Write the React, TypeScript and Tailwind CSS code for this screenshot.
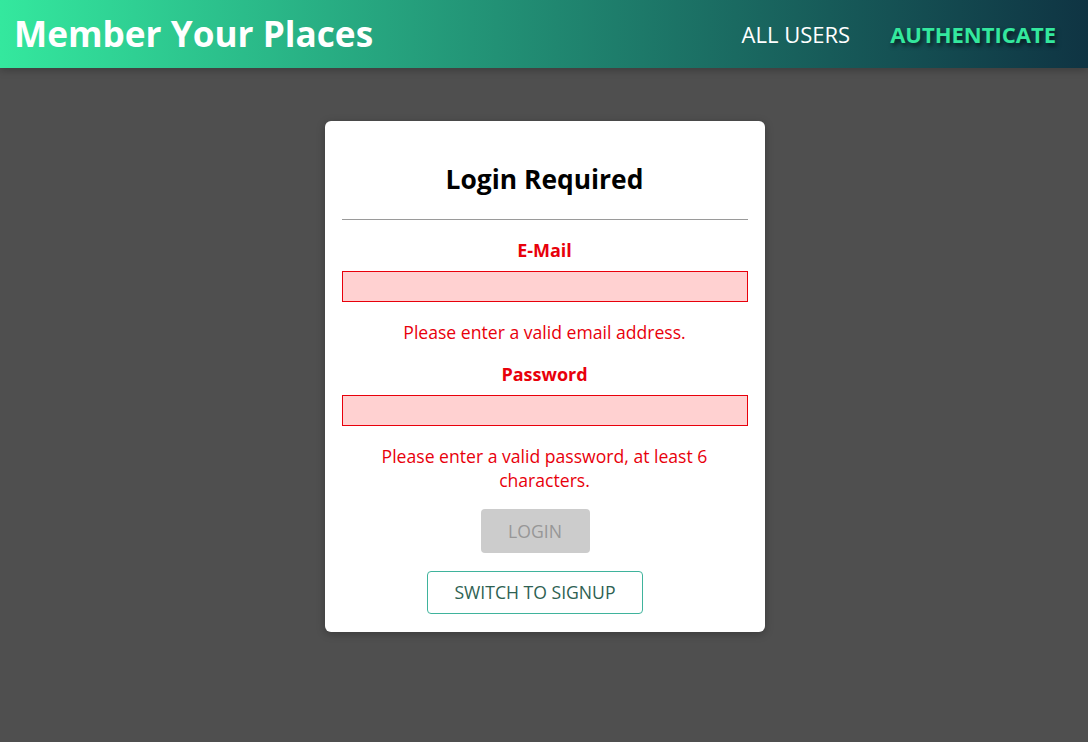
import React from 'react';

const font = { fontFamily: '"Open Sans", "Noto Sans", sans-serif' };

const Field: React.FC<{ label: string; type: string; error: string }> = ({ label, type, error }) => (
  <div className="flex flex-col">
    <label className="text-[18px] leading-[24px] font-bold text-[#e8000b] mb-[9px]">{label}</label>
    <input
      type={type}
      className="h-[31px] w-full border border-[#e8000b] bg-[#ffd1d1] px-1 outline-none"
    />
    <p className="mt-[18px] text-[17.6px] leading-[24px] text-[#e8000b] px-[20px]">{error}</p>
  </div>
);

export default function App() {
  return (
    <div className="min-h-[742px] bg-[#4f4f4f]" style={font}>
      <header className="h-[68px] flex items-center justify-between pl-[14px] pr-[32px] bg-gradient-to-r from-[#34e89e] to-[#0f3443] shadow-[0_2px_8px_rgba(0,0,0,0.26)]">
        <h1 className="text-[35.2px] font-bold text-white leading-none">Member Your Places</h1>
        <nav className="flex items-center gap-[40px] text-[22px]">
          <a className="text-white">ALL USERS</a>
          <a className="font-bold text-[#34e89e] [text-shadow:2px_3px_4px_rgba(0,0,0,0.6)]">AUTHENTICATE</a>
        </nav>
      </header>

      <main className="pt-[53px] pl-px">
        <div className="w-[440px] mx-auto bg-white rounded-md shadow-[0_2px_8px_rgba(0,0,0,0.26)] px-[17px] pt-[40px] pb-[18px] text-center">
          <h2 className="text-[26.4px] leading-[36px] font-bold text-black">Login Required</h2>
          <hr className="mt-[22px] border-0 h-px bg-[#9a9a9a]" />

          <form className="flex flex-col">
            <div className="mt-[18px]">
              <Field label="E-Mail" type="email" error="Please enter a valid email address." />
            </div>
            <div className="mt-[18px]">
              <Field
                label="Password"
                type="password"
                error="Please enter a valid password, at least 6 characters."
              />
            </div>

            <div className="flex flex-col items-center mr-[19px]">
              <button
                type="submit"
                disabled
                className="mt-[17px] h-[44px] w-[109px] rounded bg-[#ccc] text-[#979797] text-[17.6px]"
              >
                LOGIN
              </button>
              <button
                type="button"
                className="mt-[18px] h-[43px] w-[216px] rounded border border-[#3fb39c] text-[#2e6152] text-[17.6px] bg-transparent"
              >
                SWITCH TO SIGNUP
              </button>
            </div>
          </form>
        </div>
      </main>
    </div>
  );
}
